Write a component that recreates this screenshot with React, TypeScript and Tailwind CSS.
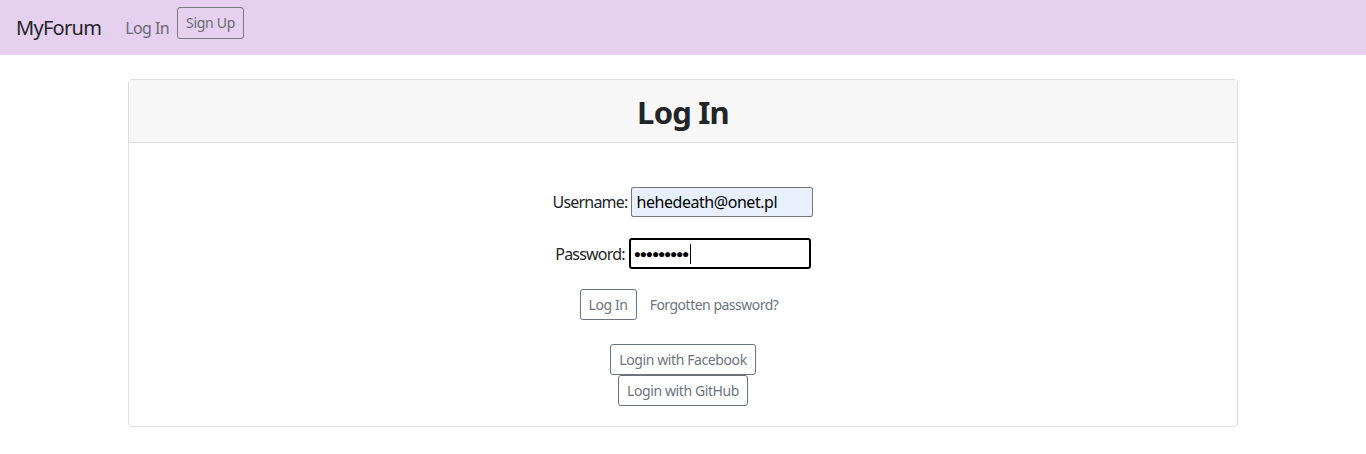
import React from 'react';

const font = { fontFamily: '"Noto Sans", "Open Sans", sans-serif' };

const OutlineBtn = ({ children, className = '' }: { children: React.ReactNode; className?: string }) => (
  <button
    className={`border border-[#6c757d] rounded-[3px] text-[#6c757d] text-[14px] tracking-[-0.4px] leading-[21px] px-[8px] py-[4px] bg-white ${className}`}
  >
    {children}
  </button>
);

const App = () => {
  return (
    <div className="min-h-[454px] bg-white text-[#212529]" style={font}>
      <nav className="h-[55px] bg-[#e5d0ef] flex items-center px-4">
        <span className="text-[20px] tracking-[-0.7px] text-[#212529] mr-[24px]">MyForum</span>
        <a className="text-[16px] tracking-[-0.6px] text-[#6c6a70] mr-[8px]">Log In</a>
        <button className="border border-[#7a7880] rounded-[3px] text-[14px] tracking-[-0.3px] text-[#6c6a70] px-[8px] h-[32px] -mt-[10px]">
          Sign Up
        </button>
      </nav>

      <div className="w-[1110px] mx-auto mt-6 border border-[#dfdfdf] rounded-[4px]">
        <div className="h-[63px] bg-[#f7f7f7] border-b border-[#dfdfdf] flex items-center justify-center pt-[3px]">
          <h1 className="text-[31px] tracking-[-0.8px] font-bold text-[#212529]">Log In</h1>
        </div>
        <div className="flex flex-col items-center pt-[44px] pb-[20px]">
          <div className="flex items-center h-[30px]">
            <label className="text-[16px] tracking-[-0.8px] mr-[4px]">Username:</label>
            <input
              readOnly
              value="hehedeath@onet.pl"
              className="w-[182px] h-[30px] border border-[#767676] rounded-[2px] bg-[#e8f0fe] px-[4px] text-[16px] tracking-[-0.45px] text-black outline-none"
            />
          </div>
          <div className="flex items-center h-[31px] mt-[21px]">
            <label className="text-[16px] tracking-[-0.8px] mr-[4px]">Password:</label>
            <div className="w-[182px] h-[31px] border-2 border-black rounded-[3px] bg-white flex items-center px-[3px]">
              <span className="text-[12px] tracking-[-1.2px] text-black">●●●●●●●●●</span>
              <span className="w-px h-[20px] bg-black ml-[2px]" />
            </div>
          </div>
          <div className="flex items-center mt-[20px] mr-[8px]">
            <OutlineBtn className="h-[31px]">Log In</OutlineBtn>
            <span className="text-[14px] tracking-[-0.5px] text-[#6c757d] ml-[13px]">Forgotten password?</span>
          </div>
          <div className="flex flex-col items-center mt-[24px]">
            <OutlineBtn className="h-[31px]">Login with Facebook</OutlineBtn>
            <OutlineBtn className="h-[31px]">Login with GitHub</OutlineBtn>
          </div>
        </div>
      </div>
    </div>
  );
};

export default App;
